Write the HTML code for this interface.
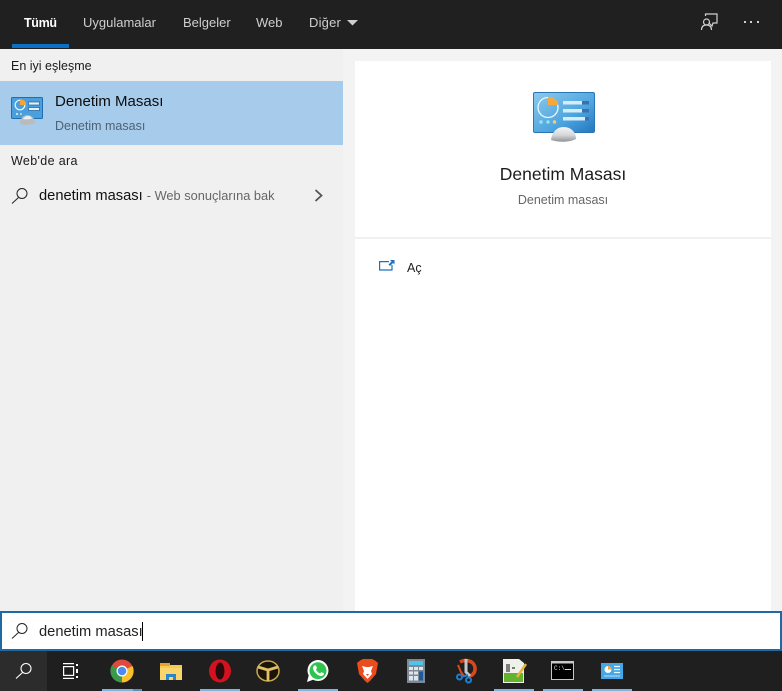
<!DOCTYPE html>
<html lang="tr"><head><meta charset="utf-8"><title>Denetim Masası</title>
<style>
html,body{margin:0;padding:0}
body{width:782px;height:691px;position:relative;overflow:hidden;background:#f3f3f3;font-family:"Liberation Sans",sans-serif}
.a{position:absolute;white-space:nowrap}
svg{position:absolute;overflow:visible}
.t{font-size:13px;line-height:16px;top:15px;color:#cfcfcf}
.u{position:absolute;top:689px;width:40px;height:2px;background:#7db4e0}
</style></head><body>
<div class="a" style="left:0;top:0;width:782px;height:49px;background:#202020"></div>
<div class="a" style="left:12px;top:44px;width:57px;height:4px;background:#0a71c6"></div>
<div class="a t" style="left:24px;color:#fff;font-weight:bold;font-size:12.500px;letter-spacing:-.35px">Tümü</div>
<div class="a t" style="left:83px">Uygulamalar</div>
<div class="a t" style="left:183px">Belgeler</div>
<div class="a t" style="left:256px">Web</div>
<div class="a t" style="left:309px;letter-spacing:.2px">Diğer</div>
<svg style="left:347px;top:20px" width="10" height="6"><path d="M0 0H11L5.500 5.500Z" fill="#cfcfcf"/></svg>
<svg style="left:700px;top:13px" width="20" height="20" fill="none" stroke="#d0d0d0" stroke-width="1.200"><path d="M5.500 3V1H17V10H13L12 13L9 10"/><circle cx="6.500" cy="9" r="3"/><path d="M1.500 17C1.500 13.500 3.500 12 6.500 12S11.500 13.500 11.500 17"/></svg>
<div class="a" style="left:744px;top:21px;width:2px;height:2px;background:#d0d0d0;box-shadow:6px 0 #d0d0d0,13px 0 #d0d0d0"></div>

<div class="a" style="left:0;top:49px;width:343px;height:562px;background:#f0f0f0"></div>
<div class="a" style="left:11px;top:58px;font-size:12.500px;line-height:16px;color:#1a1a1a">En iyi eşleşme</div>
<div class="a" style="left:0;top:81px;width:343px;height:64px;background:#a6cbeb"></div>

<svg style="left:11px;top:97px" width="32" height="28" viewBox="0 0 32 28">
<rect x=".5" y=".5" width="31" height="21" rx="1" fill="#4a9fdc" stroke="#1f6fb0"/>
<circle cx="9" cy="8" r="4.800" fill="none" stroke="#eaf6fc" stroke-width="1.200"/><path d="M9 3H13L15 6V8H9Z" fill="#f5a43a"/>
<rect x="17.500" y="5" width="11" height="3" fill="#dff2fb" stroke="#1f5fa0" stroke-width=".7"/><rect x="17.500" y="10.500" width="11" height="3" fill="#dff2fb" stroke="#1f5fa0" stroke-width=".7"/>
<circle cx="6" cy="17" r="1" fill="#dff"/><circle cx="10" cy="17" r="1" fill="#ffd98a"/>
<path d="M9 27C9 21 13 18 16 18C20 18 24 21 24 26C20 28.500 13 28.500 9 27Z" fill="#b9bcbf"/><path d="M12 22C13 20 15 19 17 19C19 19 20.500 20 21 21.500C18 22.500 15 22.500 12 22Z" fill="#eceeef"/>
</svg>
<div class="a" style="left:55px;top:93px;font-size:15px;line-height:18px;color:#0d0d0d">Denetim Masası</div>
<div class="a" style="left:55px;top:118px;font-size:12.500px;line-height:16px;color:#4d6275">Denetim masası</div>

<div class="a" style="left:11px;top:153px;font-size:12.500px;line-height:16px;color:#1a1a1a;letter-spacing:.35px">Web'de ara</div>
<svg style="left:11px;top:187px" width="18" height="18" fill="none" stroke="#222" stroke-width="1"><circle cx="11" cy="6.500" r="5"/><path d="M7.500 10.500L1 16.500"/></svg>
<div class="a" style="left:39px;top:187px;font-size:14.700px;line-height:18px;color:#111">denetim masası <span style="font-size:12.800px;color:#666">- Web sonuçlarına bak</span></div>
<svg style="left:314px;top:189px" width="10" height="14" fill="none" stroke="#555" stroke-width="1.800"><path d="M1.500 1L7.500 6.500L1.500 12"/></svg>

<div class="a" style="left:355px;top:61px;width:416px;height:550px;background:#fff"></div>
<div class="a" style="left:355px;top:237px;width:416px;height:2px;background:#f0f0f0"></div>
<svg style="left:533px;top:92px" width="62" height="50" viewBox="0 0 62 50">
<defs><linearGradient id="g" x1="0" y1="0" x2="1" y2="1"><stop offset="0" stop-color="#8ccaee"/><stop offset=".6" stop-color="#4ea5de"/><stop offset="1" stop-color="#2277c0"/></linearGradient><linearGradient id="d" x1="0" y1="0" x2="0" y2="1"><stop offset="0" stop-color="#f4f5f6"/><stop offset=".55" stop-color="#d5d7d9"/><stop offset="1" stop-color="#8f9296"/></linearGradient></defs>
<rect x=".5" y=".5" width="61" height="40" rx="1.500" fill="url(#g)" stroke="#2a76b5"/>
<circle cx="15" cy="15.500" r="10" fill="none" stroke="#eef8fd" stroke-width="1.300"/><path d="M15 5H19L25 9.500V13H15Z" fill="#f7a83c"/>
<rect x="30" y="9" width="26" height="3.500" fill="#3c6fb0"/><rect x="30" y="9" width="19" height="3.500" fill="#d3eefa"/>
<rect x="30" y="17" width="26" height="3.500" fill="#3c6fb0"/><rect x="30" y="17" width="19" height="3.500" fill="#d3eefa"/>
<rect x="30" y="25" width="26" height="3.500" fill="#3c6fb0"/><rect x="30" y="25" width="22" height="3.500" fill="#d3eefa"/>
<circle cx="8" cy="30" r="1.700" fill="#8fe6f5"/><circle cx="15" cy="30" r="1.700" fill="#8fe6f5"/><circle cx="21.500" cy="30" r="1.700" fill="#f5cf6a"/>
<path d="M18 48C19 40 24 35 30.500 35C38 35 43 40 43 47C36 50.500 25 50.500 18 48Z" fill="url(#d)"/>
</svg>
<div class="a" style="left:355px;width:416px;text-align:center;top:164px;font-size:17.500px;line-height:20px;color:#1c1c1c">Denetim Masası</div>
<div class="a" style="left:355px;width:416px;text-align:center;top:192px;font-size:12.500px;line-height:16px;color:#666">Denetim masası</div>
<svg style="left:379px;top:258px" width="16" height="14" fill="none" stroke="#1f72b8" stroke-width="1.200"><path d="M10 3.600H.6V12H13V7"/></svg>
<svg style="left:379px;top:258px" width="16" height="14"><path d="M9.500 6.500L12.500 3.500L11 2H15.500V6.500L14 5L11 8Z" fill="#1f72b8"/></svg>
<div class="a" style="left:407px;top:260px;font-size:12.500px;line-height:16px;color:#222">Aç</div>

<div class="a" style="left:0;top:611px;width:778px;height:36px;background:#fff;border:2px solid #1d6aa5"></div>
<svg style="left:11px;top:622px" width="18" height="18" fill="none" stroke="#222" stroke-width="1"><circle cx="11" cy="6.500" r="5"/><path d="M7.500 10.500L1 16.500"/></svg>
<div class="a" style="left:39px;top:623px;font-size:14.700px;line-height:18px;color:#222">denetim masası</div>
<div class="a" style="left:142px;top:622px;width:1px;height:19px;background:#000"></div>

<div class="a" style="left:0;top:651px;width:782px;height:40px;background:#1f1f1f"></div>
<div class="a" style="left:0;top:651px;width:47px;height:40px;background:#2c2c2c"></div>
<svg style="left:15px;top:662px" width="18" height="18" fill="none" stroke="#fff" stroke-width="1.100"><circle cx="11" cy="6.500" r="5"/><path d="M7.500 10.500L1 16.500"/></svg>
<svg style="left:63px;top:663px" width="16" height="16" fill="none" stroke="#fff" stroke-width="1.200"><path d="M0 .6H11M0 15.400H11"/><rect x=".6" y="3.600" width="10" height="8.800"/><path d="M14 1V3M14 6V10M14 13V15" stroke-width="2"/></svg>

<svg style="left:110px;top:659px" width="24" height="24" viewBox="0 0 24 24"><circle cx="12" cy="12" r="11.500" fill="#dd4b3e"/><path d="M12 12L22.500 7A11.500 11.500 0 0 1 12 23.500Z" fill="#fbc02d"/><path d="M12 12L12 23.500A11.500 11.500 0 0 1 1.800 6.500Z" fill="#3a9a4a"/><circle cx="12" cy="12" r="5.500" fill="#fff"/><circle cx="12" cy="12" r="4.300" fill="#4c8bf0"/></svg>

<svg style="left:160px;top:662px" width="22" height="18" viewBox="0 0 22 18"><path d="M0 1H8L10 3H22V18H0Z" fill="#f6c94f"/><rect x="0" y="1" width="10" height="3" fill="#e0a52e"/><rect x="0" y="6" width="22" height="12" fill="#f9d66b"/><path d="M6 18V12H16V18H13V15H9V18Z" fill="#2b86c9"/></svg>

<svg style="left:208px;top:659px" width="24" height="24" viewBox="0 0 24 24"><ellipse cx="12" cy="12" rx="11" ry="11.500" fill="#d3121f"/><ellipse cx="12" cy="12" rx="4.500" ry="8.500" fill="#2a0a0c"/></svg>

<svg style="left:256px;top:660px" width="24" height="22" viewBox="0 0 24 22" fill="none"><ellipse cx="12" cy="11" rx="11" ry="10" fill="#1a1408" stroke="#c9a850" stroke-width="1.500"/><path d="M2 7L12 10L22 7M12 10V21" stroke="#e0bf68" stroke-width="2.800"/></svg>

<svg style="left:307px;top:660px" width="22" height="22" viewBox="0 0 22 22"><path d="M0 22L1.700 15.500A10.500 10.500 0 1 1 6 19.800Z" fill="#fff"/><circle cx="11" cy="10.700" r="8.500" fill="#2fc44f"/><path d="M7.500 5.500L9 5.500L10 8L9 9.500C10 11.500 11 12.500 13 13.500L14.500 12L17 13.500C16.800 15.500 15 16.200 13.500 16C9.500 15 6.500 11.500 6 8.500C6 7 6.500 6 7.500 5.500Z" fill="#fff"/></svg>

<svg style="left:357px;top:659px" width="21" height="24" viewBox="0 0 21 24"><path d="M3 1.500L6 0H15L18 1.500L21 4L19 15L13 22L10.500 24L8 22L2 15L0 4Z" fill="#ea4c1d"/><path d="M5 7L9 8H12L16 7L14 12L15 15L10.500 20L6 15L7 12Z" fill="#fff"/><path d="M9 15H12L10.500 17Z" fill="#ea4c1d"/></svg>

<svg style="left:407px;top:659px" width="18" height="24" viewBox="0 0 18 24"><rect width="18" height="24" fill="#7d8a96"/><rect x="2" y="2" width="14" height="4" fill="#4fc3ea"/><path d="M2 8H6V11H2ZM7 8H11V11H7ZM12 8H16V11H12ZM2 12.500H6V15.500H2ZM7 12.500H11V15.500H7ZM2 17H6V21.500H2ZM7 17H11V21.500H7Z" fill="#dfe5ea"/><rect x="12" y="12.500" width="4" height="9" fill="#1e5a9c"/></svg>

<svg style="left:455px;top:659px" width="22" height="24" viewBox="0 0 22 24" fill="none"><path d="M5 3C12 -1 21 3 20 11C19.500 15 16 17 14 17" stroke="#d9481c" stroke-width="3.500"/><path d="M11 0L11 13L15 17" stroke="#c4c8cc" stroke-width="3"/><path d="M3 6L6 13L9 17" stroke="#d9481c" stroke-width="2"/><circle cx="4.500" cy="18" r="2.500" stroke="#1e7fd0" stroke-width="2"/><circle cx="13.500" cy="21" r="2.500" stroke="#1e7fd0" stroke-width="2"/><path d="M6 18L13 16" stroke="#1e7fd0" stroke-width="2"/></svg>

<svg style="left:503px;top:659px" width="24" height="24" viewBox="0 0 24 24"><path d="M0 0H16L21 4V24H0Z" fill="#eef1ea"/><rect x="1" y="14" width="19" height="9" fill="#63b32e"/><path d="M4 5V13M6 5V13M9 9H12" stroke="#333" stroke-width="1.200"/><path d="M23 5L14 18" stroke="#e6b53a" stroke-width="2.500"/></svg>

<svg style="left:551px;top:661px" width="23" height="19" viewBox="0 0 23 19"><rect width="23" height="19" fill="#c8c8c8"/><rect x="1" y="2.500" width="21" height="15.500" fill="#000"/><text x="3" y="9" font-size="6" fill="#ddd" font-family="Liberation Mono,monospace">C:\</text><rect x="14" y="8" width="6" height="1" fill="#ddd"/></svg>

<svg style="left:601px;top:663px" width="22" height="16" viewBox="0 0 22 16"><rect width="22" height="16" fill="#46a7e6"/><circle cx="7" cy="6.500" r="3.500" fill="#fff"/><path d="M7 3A3.500 3.500 0 0 1 10.500 6.500H7Z" fill="#f5a43a"/><path d="M13 3.500H19M13 6.500H19M13 9.500H19" stroke="#eaf8ff" stroke-width="1.300"/><path d="M3 13H19" stroke="#b6e2f7" stroke-width="1"/></svg>

<div class="u" style="left:102px"></div><div class="a" style="left:133px;top:689px;width:9px;height:2px;background:#5b8fb8"></div><div class="u" style="left:200px"></div><div class="u" style="left:298px"></div><div class="u" style="left:494px"></div><div class="u" style="left:543px"></div><div class="u" style="left:592px"></div>
</body></html>
